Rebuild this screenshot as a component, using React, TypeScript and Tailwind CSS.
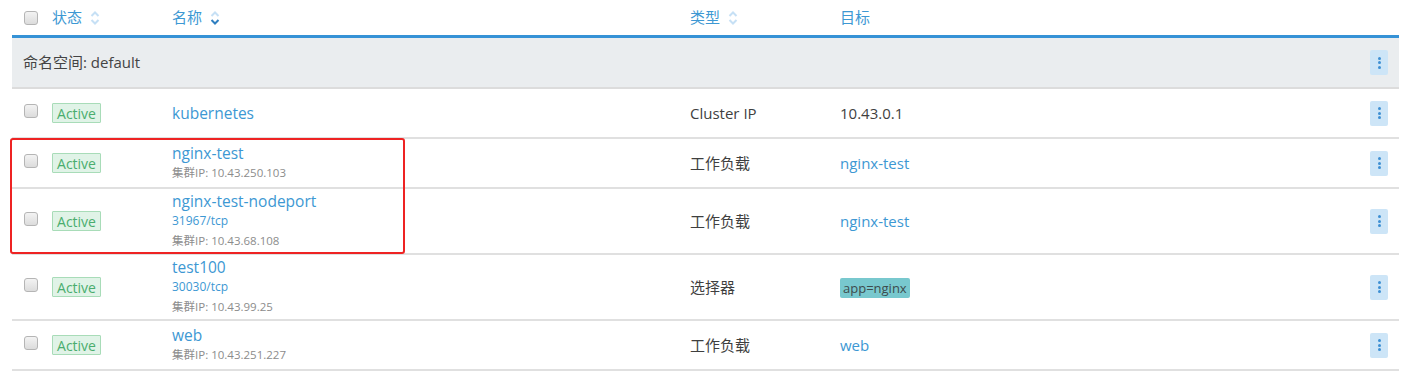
import React from "react";

const FONT = { fontFamily: '"Open Sans", "Noto Sans CJK SC", sans-serif' };

function Checkbox() {
  return (
    <span className="inline-block w-[14px] h-[14px] rounded-[3px] border border-[#b5b5b5] bg-gradient-to-b from-[#f3f3f3] to-[#dcdcdc]" />
  );
}

function SortIcon({ active }: { active?: boolean }) {
  return (
    <svg width="10" height="16" viewBox="0 0 10 16" className="ml-[8px]">
      <path d="M1.5 6 L5 2.5 L8.5 6" fill="none" stroke="#c6e0f5" strokeWidth="2" />
      <path d="M1.5 10 L5 13.5 L8.5 10" fill="none" stroke={active ? "#2f7fc0" : "#c6e0f5"} strokeWidth="2" />
    </svg>
  );
}

function MenuBtn() {
  return (
    <div className="w-[18px] h-[25px] rounded-[2px] bg-[#cde5f7] flex flex-col items-center justify-center gap-[1.5px]">
      <span className="w-[3px] h-[3px] rounded-full bg-[#3d8fd3]" />
      <span className="w-[3px] h-[3px] rounded-full bg-[#3d8fd3]" />
      <span className="w-[3px] h-[3px] rounded-full bg-[#3d8fd3]" />
    </div>
  );
}

function Badge() {
  return (
    <span className="inline-flex items-center justify-center w-[49px] h-[20px] border border-[#a8dcb8] bg-[#e0f3e7] text-[#4aad6e] text-[14px] rounded-[1px]">
      Active
    </span>
  );
}

type Row = {
  name: string;
  port?: string;
  ip?: string;
  type: string;
  target: React.ReactNode;
};

const rows: Row[] = [
  { name: "kubernetes", type: "Cluster IP", target: <span className="text-[#3f3f3f]">10.43.0.1</span> },
  { name: "nginx-test", ip: "10.43.250.103", type: "工作负载", target: <span className="text-[#3d98d3]">nginx-test</span> },
  { name: "nginx-test-nodeport", port: "31967/tcp", ip: "10.43.68.108", type: "工作负载", target: <span className="text-[#3d98d3]">nginx-test</span> },
  {
    name: "test100",
    port: "30030/tcp",
    ip: "10.43.99.25",
    type: "选择器",
    target: (
      <span className="inline-block bg-[#78c8ce] text-[#3d4b4d] text-[13px] leading-[20px] px-[3px] rounded-[2px]">app=nginx</span>
    ),
  },
  { name: "web", ip: "10.43.251.227", type: "工作负载", target: <span className="text-[#3d98d3]">web</span> },
];

const cols = "grid grid-cols-[40px_120px_518px_150px_1fr_40px]";

export default function App() {
  return (
    <div className="relative w-[1412px] h-[383px] bg-white text-[14px] text-[#4a4a4a]" style={FONT}>
      <div className="pl-3 pr-[13px]">
        {/* header */}
        <div className={`${cols} h-[38px] items-center border-b-[3px] border-[#3592d6] text-[#3d98d3] text-[15px]`}>
          <div className="pl-3 flex items-center"><Checkbox /></div>
          <div className="flex items-center">状态<SortIcon /></div>
          <div className="flex items-center">名称<SortIcon active /></div>
          <div className="flex items-center">类型<SortIcon /></div>
          <div>目标</div>
          <div />
        </div>
        {/* group */}
        <div className="h-[51px] bg-[#eaedef] border-b-2 border-[#dcdcdc] flex items-center justify-between pl-[11px] pr-[11px]">
          <span className="text-[#444] text-[15px]">命名空间: default</span>
          <MenuBtn />
        </div>
        {rows.map((r) => (
          <div key={r.name} className={`${cols} min-h-[50px] items-center border-b-2 border-[#e0e0e0] py-[2px]`}>
            <div className="pl-3 flex items-center -mt-[4px]"><Checkbox /></div>
            <div className="flex items-center"><Badge /></div>
            <div className="flex flex-col">
              <span className="text-[#3d98d3] text-[15.5px] leading-[20px]">{r.name}</span>
              {r.port && <span className="text-[#3d98d3] text-[12px] leading-[20px]">{r.port}</span>}
              {r.ip && <span className="text-[#8c8c8c] text-[11.5px] leading-[20px]">集群IP: {r.ip}</span>}
            </div>
            <div className="text-[#3f3f3f] text-[15px]">{r.type}</div>
            <div className="text-[15px]">{r.target}</div>
            <div className="flex justify-end pr-[11px]"><MenuBtn /></div>
          </div>
        ))}
      </div>
      <div className="absolute left-[10px] top-[138px] w-[395px] h-[116px] border-2 border-[#ee2323] rounded-[3px]" />
    </div>
  );
}
